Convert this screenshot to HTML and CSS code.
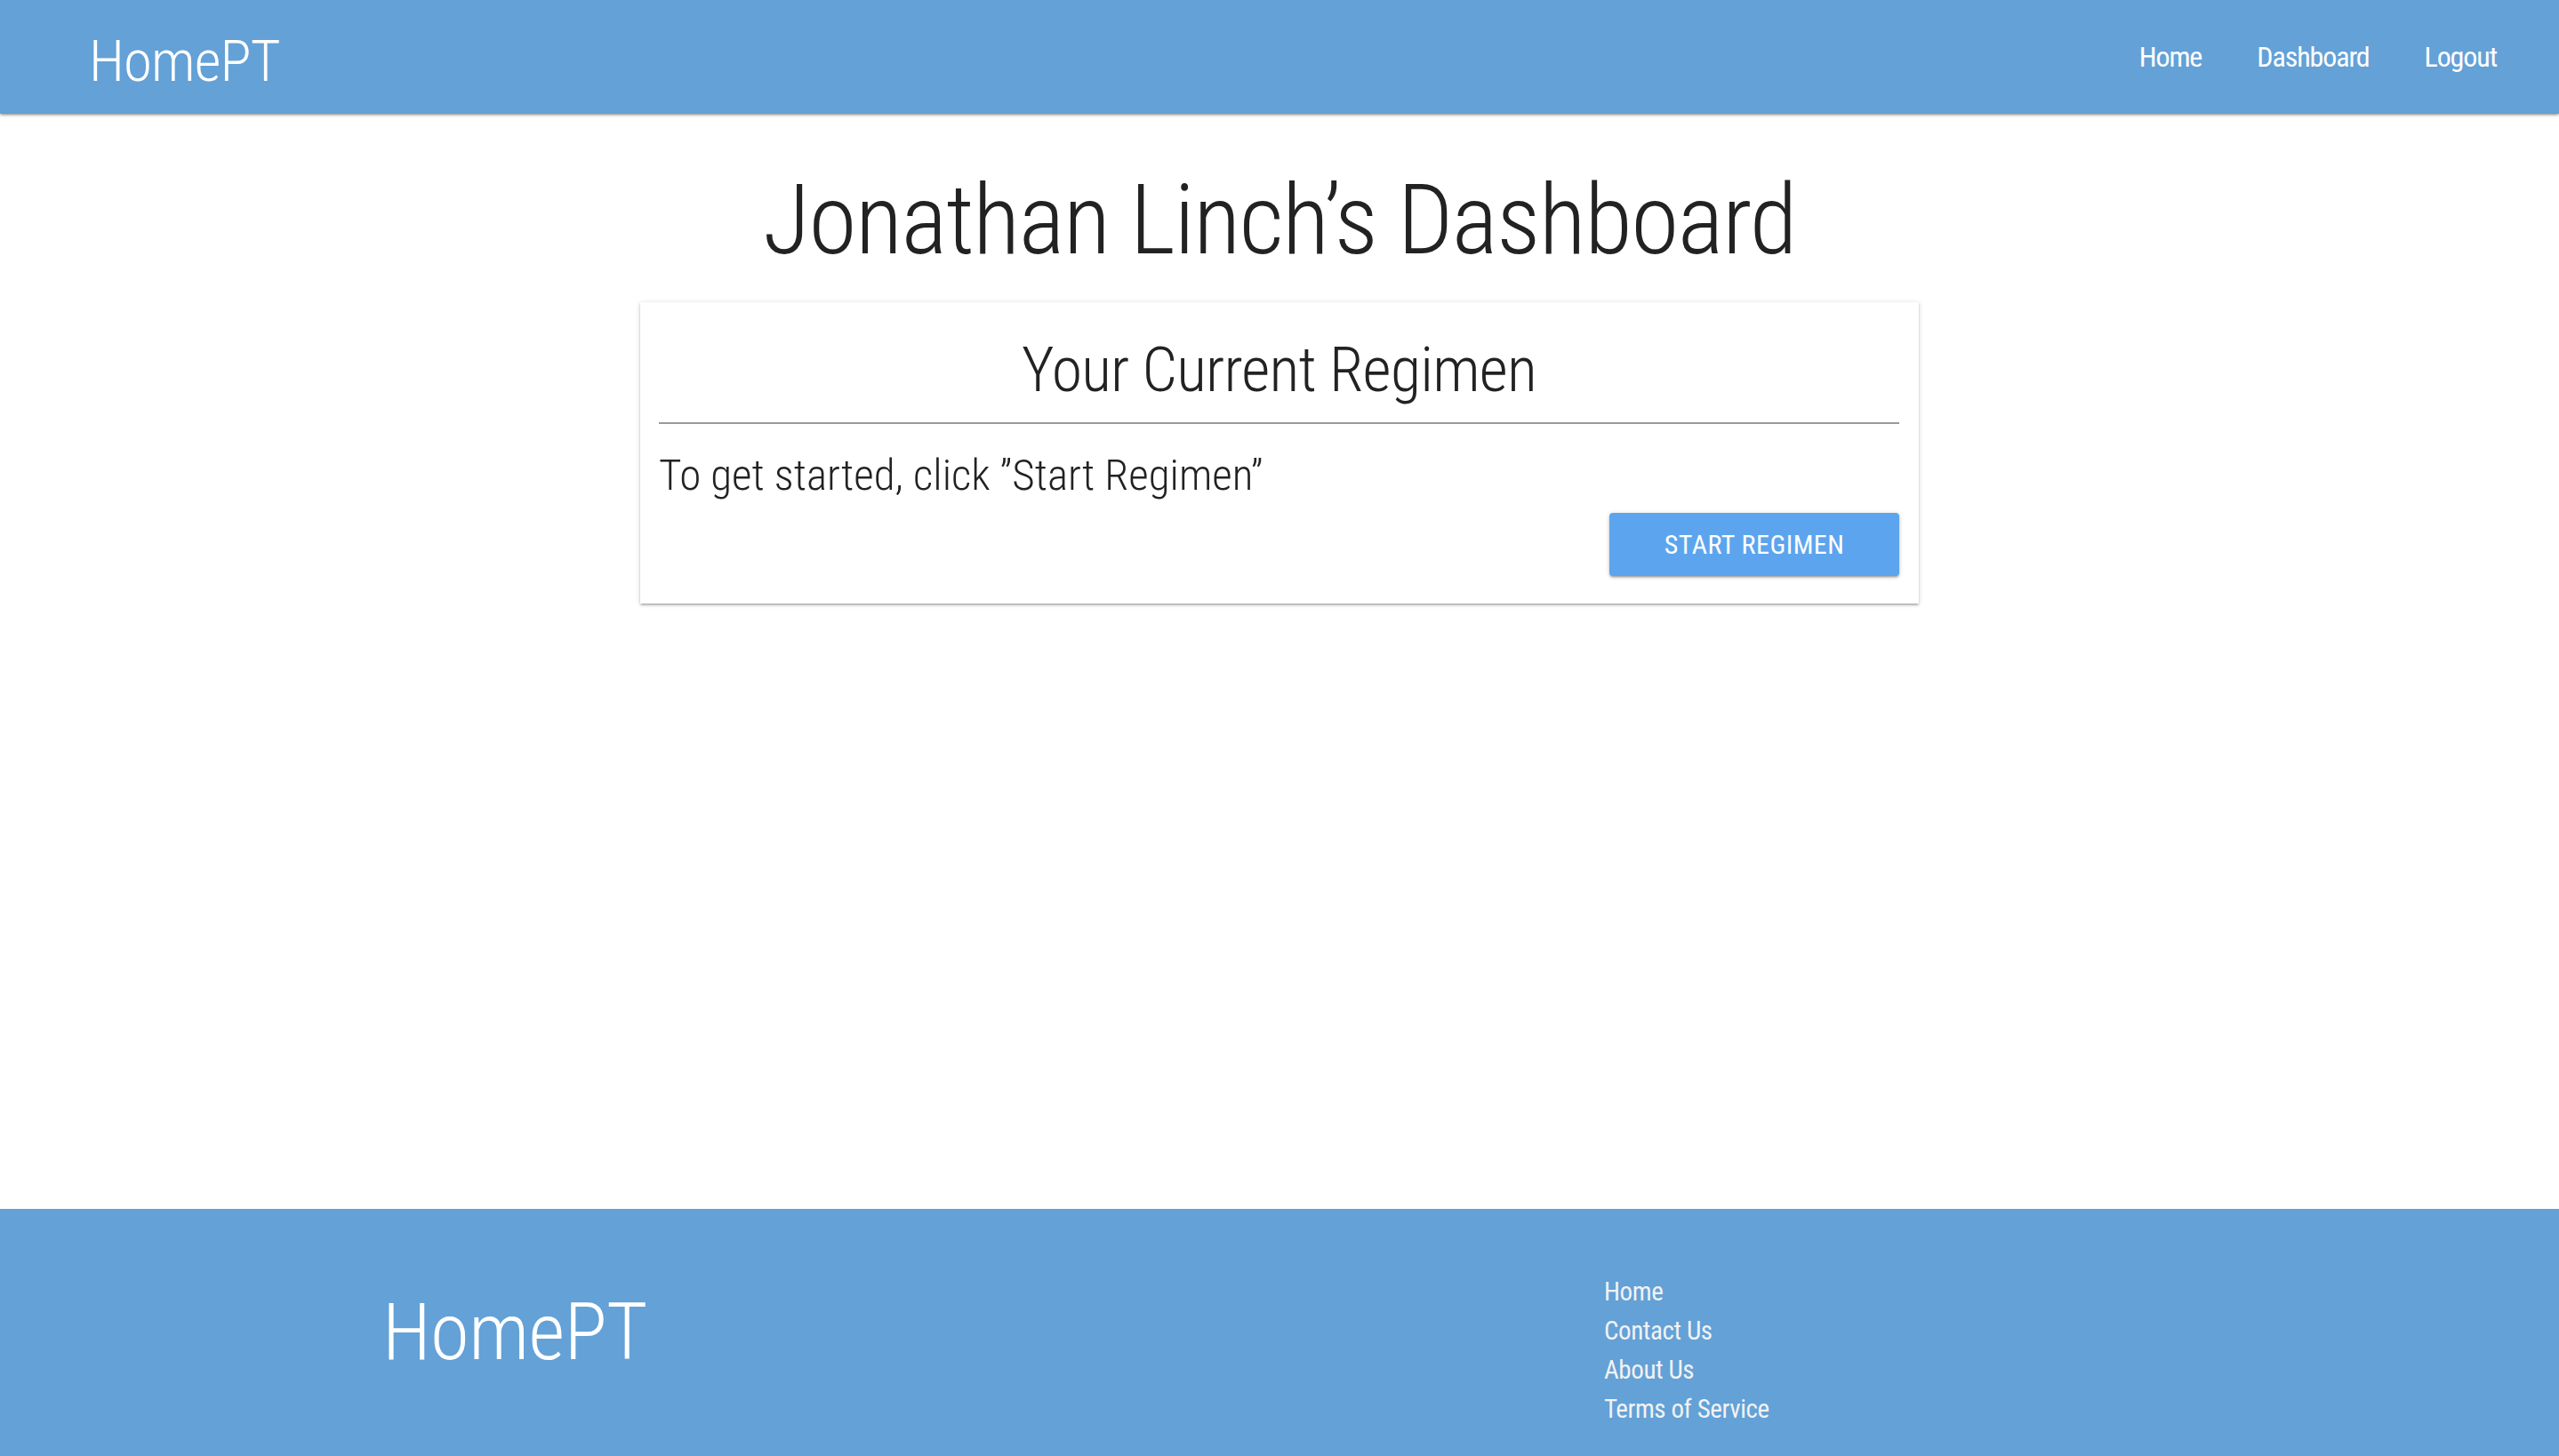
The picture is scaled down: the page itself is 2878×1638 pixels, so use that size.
FILE: index.html
```html
<!DOCTYPE html>
<html lang="en">
<head>
<meta charset="utf-8">
<title>HomePT - Dashboard</title>
<link rel="stylesheet" href="styles.css">
</head>
<body>
<div class="page">
  <header class="navbar">
    <a class="brand" href="#">HomePT</a>
    <nav class="nav-links">
      <a href="#">Home</a>
      <a href="#">Dashboard</a>
      <a href="#">Logout</a>
    </nav>
  </header>

  <main class="main">
    <h1 class="title">Jonathan Linch’s Dashboard</h1>
    <section class="card">
      <h2 class="card-title">Your Current Regimen</h2>
      <hr class="divider">
      <p class="card-text">To get started, click ”Start Regimen”</p>
      <div class="card-actions">
        <button class="btn">START REGIMEN</button>
      </div>
    </section>
  </main>

  <footer class="footer">
    <div class="footer-brand">HomePT</div>
    <ul class="footer-links">
      <li><a href="#">Home</a></li>
      <li><a href="#">Contact Us</a></li>
      <li><a href="#">About Us</a></li>
      <li><a href="#">Terms of Service</a></li>
    </ul>
  </footer>
</div>
</body>
</html>
```

FILE: styles.css
```css
* { box-sizing: border-box; }

html, body {
  margin: 0;
  padding: 0;
  background: #ffffff;
}

body {
  font-family: "Roboto Condensed", "Noto Sans", "Liberation Sans", sans-serif;
  font-stretch: 70%;
  color: #222222;
}

a { color: inherit; text-decoration: none; }

.page {
  min-height: 100vh;
  display: flex;
  flex-direction: column;
}

.navbar {
  height: 128px;
  background: #63a1d7;
  color: #ffffff;
  display: flex;
  align-items: flex-start;
  justify-content: space-between;
  box-shadow: 0 2px 2px 0 rgba(0,0,0,0.14), 0 3px 1px -2px rgba(0,0,0,0.12), 0 1px 5px 0 rgba(0,0,0,0.2);
  position: relative;
  z-index: 2;
}

.brand {
  font-size: 65px;
  font-weight: 300;
  letter-spacing: -0.9px;
  line-height: 128px;
  padding-top: 5px;
  margin-left: 100px;
}

.nav-links {
  display: flex;
  margin-right: 39px;
}

.nav-links a {
  font-size: 32px;
  font-weight: 400;
  letter-spacing: -1.1px;
  line-height: 128px;
  padding: 0 31px;
}

.main {
  flex: 1;
  display: flex;
  flex-direction: column;
  align-items: center;
}

.title {
  margin: 54px 0 26px;
  font-size: 110px;
  font-weight: 300;
  letter-spacing: -1.5px;
  line-height: 132px;
  text-align: center;
}

.card {
  width: 1438px;
  padding: 34px 22px 31px 21px;
  background: #fff;
  box-shadow: 0 2px 2px 0 rgba(0,0,0,0.14), 0 3px 1px -2px rgba(0,0,0,0.12), 0 1px 5px 0 rgba(0,0,0,0.2);
}

.card-title {
  margin: 0;
  font-size: 70px;
  font-weight: 300;
  letter-spacing: -0.8px;
  line-height: 84px;
  text-align: center;
}

.divider {
  margin: 17px 0 0;
  border: 0;
  height: 2px;
  background: #9a9a9a;
}

.card-text {
  margin: 30px 0 0;
  font-size: 49px;
  font-weight: 300;
  line-height: 55px;
}

.card-actions {
  display: flex;
  justify-content: flex-end;
  margin-top: 15px;
}

.btn {
  width: 326px;
  height: 71px;
  border: 0;
  border-radius: 4px;
  background: #5ca5ee;
  color: #ffffff;
  font-family: inherit;
  font-stretch: inherit;
  font-size: 30px;
  letter-spacing: 0.5px;
  box-shadow: 0 2px 2px 0 rgba(0,0,0,0.14), 0 3px 1px -2px rgba(0,0,0,0.12), 0 1px 5px 0 rgba(0,0,0,0.2);
  cursor: pointer;
}

.footer {
  height: 278px;
  background: #63a1d7;
  color: #ffffff;
  display: grid;
  grid-template-columns: 1374px 1fr;
  padding-left: 430px;
}

.footer-brand {
  font-size: 89px;
  font-weight: 300;
  letter-spacing: -0.6px;
  line-height: 107px;
  margin-top: 85px;
}

.footer-links {
  list-style: none;
  margin: 71px 0 0;
  padding: 0;
  color: #f2f2f2;
  font-size: 29px;
  font-weight: 400;
  letter-spacing: -0.4px;
  line-height: 44px;
}
```
